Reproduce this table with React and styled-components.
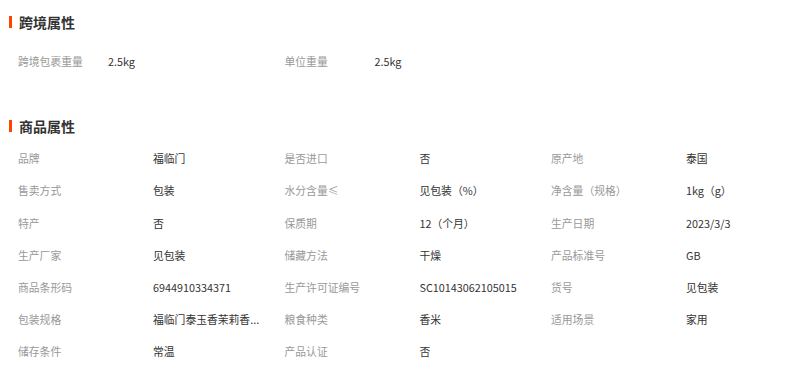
import React from "react";
import styled, { createGlobalStyle } from "styled-components";

const GlobalStyle = createGlobalStyle`
  body {
    margin: 0;
    overflow: hidden;
    background: #fff;
    font-family: "Noto Sans CJK SC", "Noto Sans", sans-serif;
  }
`;

// data
const crossBorder = [
  ["跨境包裹重量", "2.5kg"],
  ["单位重量", "2.5kg"],
];

const goods = [
  ["品牌", "福临门"],
  ["是否进口", "否"],
  ["原产地", "泰国"],
  ["售卖方式", "包装"],
  ["水分含量≤", "见包装（%）"],
  ["净含量（规格）", "1kg（g）"],
  ["特产", "否"],
  ["保质期", "12（个月）"],
  ["生产日期", "2023/3/3"],
  ["生产厂家", "见包装"],
  ["储藏方法", "干燥"],
  ["产品标准号", "GB"],
  ["商品条形码", "6944910334371"],
  ["生产许可证编号", "SC10143062105015"],
  ["货号", "见包装"],
  ["包装规格", "福临门泰玉香茉莉香..."],
  ["粮食种类", "香米"],
  ["适用场景", "家用"],
  ["储存条件", "常温"],
  ["产品认证", "否"],
];

const App = () => {
  return (
    <>
      <GlobalStyle />
      <Page>
        <Section $top={10}>
          <Title>跨境属性</Title>
          <Grid $cols={2} $gap={11}>
            {crossBorder.map(([label, value]) => (
              <Item key={label} $labelWidth={90}>
                <Label>{label}</Label>
                <Value>{value}</Value>
              </Item>
            ))}
          </Grid>
        </Section>
        <Section $top={37}>
          <Title>商品属性</Title>
          <Grid $cols={3} $gap={4}>
            {goods.map(([label, value]) => (
              <Item key={label} $labelWidth={135}>
                <Label>{label}</Label>
                <Value>{value}</Value>
              </Item>
            ))}
          </Grid>
        </Section>
      </Page>
    </>
  );
};

const Page = styled.div`
  padding-left: 9px;
`;
const Section = styled.section`
  padding-top: ${(p) => p.$top}px;
`;
const Title = styled.h3`
  margin: 0;
  display: flex;
  align-items: center;
  gap: 7px;
  height: 24px;
  font-size: 14px;
  font-weight: bold;
  color: #333;
  &::before {
    content: "";
    width: 3px;
    height: 12px;
    background: #ff4400;
  }
`;
const Grid = styled.div`
  display: grid;
  grid-template-columns: repeat(${(p) => p.$cols - 1}, 266.5px) 1fr;
  margin-top: ${(p) => p.$gap}px;
  padding-left: 9px;
`;
const Item = styled.div`
  display: grid;
  grid-template-columns: ${(p) => p.$labelWidth}px 1fr;
  align-items: center;
  height: 32.2px;
  font-size: 10.8px;
  line-height: 14px;
`;
const Label = styled.span`
  color: #999;
  white-space: nowrap;
`;
const Value = styled.span`
  color: #333;
  white-space: nowrap;
`;

export default App;
